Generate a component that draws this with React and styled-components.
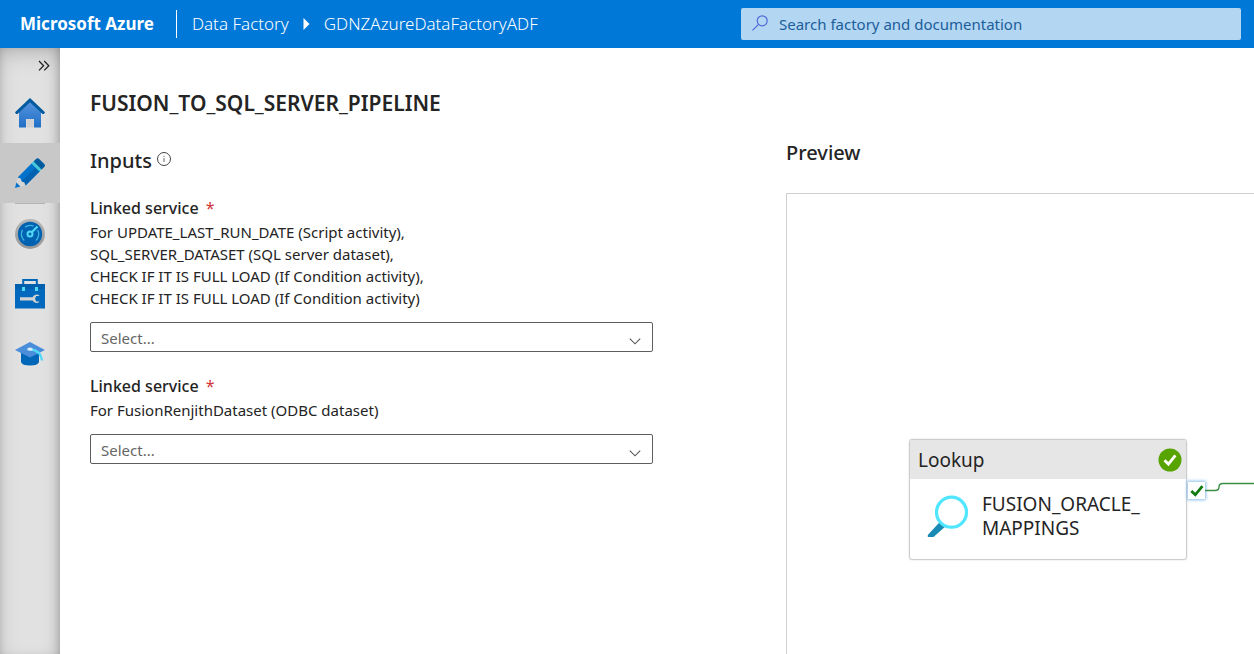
import React from 'react';
import styled, { createGlobalStyle } from 'styled-components';

const GlobalStyle = createGlobalStyle`
  * {
    box-sizing: border-box;
  }

  body {
    margin: 0;
    background: #fff;
    color: #242424;
    font-family: 'Noto Sans', 'Open Sans', sans-serif;
    font-size: 15px;
  }

  button, input, select {
    font-family: inherit;
  }
`;

const Page = styled.div`
  display: flex;
  flex-direction: column;
  height: 100vh;
  min-height: 600px;
`;

const TopBar = styled.header`
  display: flex;
  align-items: center;
  flex: none;
  height: 48px;
  padding: 0 13px 0 20px;
  background: #0078d7;
  color: #fff;
`;

const Brand = styled.a`
  color: inherit;
  font-size: 17px;
  font-weight: 700;
  line-height: 24px;
  text-decoration: none;
  white-space: nowrap;
`;

const BarDivider = styled.span`
  width: 1px;
  height: 28px;
  margin: 0 15px 0 22px;
  background: #fff;
`;

const Crumbs = styled.nav`
  display: flex;
  align-items: center;
  flex: 1;
  gap: 14px;
`;

const Crumb = styled.a`
  color: inherit;
  font-size: 17px;
  font-weight: 300;
  line-height: 24px;
  text-decoration: none;
  white-space: nowrap;
`;

const SearchBox = styled.label`
  display: flex;
  align-items: center;
  width: 40vw;
  max-width: 500px;
  height: 32px;
  padding: 0 11px;
  gap: 11px;
  border-radius: 2px;
  background: #b3d6f2;
`;

const SearchInput = styled.input`
  flex: 1;
  min-width: 0;
  padding: 0;
  border: 0;
  outline: 0;
  background: transparent;
  color: #005a9e;
  font-size: 15px;

  &::placeholder {
    color: #1b5e9b;
    opacity: 1;
  }
`;

const Body = styled.div`
  display: flex;
  flex: 1;
  min-height: 0;
`;

const Rail = styled.nav`
  display: flex;
  flex-direction: column;
  flex: none;
  width: 60px;
  background: #e1e1e1;
  box-shadow: inset 0 8px 24px -8px rgba(0, 0, 0, 0.3),
    inset -8px 0 12px -8px rgba(0, 0, 0, 0.28),
    inset 6px 0 10px -8px rgba(0, 0, 0, 0.2);
`;

const ExpandButton = styled.button`
  display: flex;
  align-items: center;
  justify-content: flex-end;
  height: 35px;
  padding: 0 10px 0 0;
  border: 0;
  background: transparent;
`;

const RailItem = styled.a`
  display: flex;
  align-items: center;
  justify-content: center;
  height: 60px;
  background: ${({ $active }) => ($active ? '#c8c8c8' : 'transparent')};
`;

const RailDivider = styled.span`
  height: 1px;
  margin: 0 15px;
  background: #b4b4b4;
`;

const Main = styled.main`
  display: grid;
  flex: 1;
  grid-template-columns: minmax(0, 58fr) minmax(0, 39fr);
  min-width: 0;
  padding-left: 30px;
`;

const FormColumn = styled.section`
  padding: 40px 133px 0 0;
`;

const Title = styled.h1`
  margin: 0;
  font-size: 21px;
  font-weight: 600;
  line-height: 30px;
  white-space: nowrap;
`;

const SectionHeading = styled.h2`
  display: flex;
  align-items: center;
  gap: 5px;
  margin: 0;
  font-size: 20px;
  font-weight: 500;
  line-height: 30px;
`;

const InputsHeading = styled(SectionHeading)`
  margin-top: 28px;
`;

const Field = styled.div`
  display: flex;
  flex-direction: column;
  margin-top: 21px;

  & + & {
    margin-top: 23px;
  }
`;

const FieldLabel = styled.label`
  font-size: 16px;
  font-weight: 500;
  line-height: 22px;
`;

const Required = styled.span`
  margin-left: 3px;
  color: #d13438;
  font-weight: 400;
`;

const Uses = styled.div`
  margin: 2px 0 13px;
  font-size: 15px;
  line-height: 22px;
`;

const UseLine = styled.span`
  display: block;
  white-space: nowrap;
`;

const SelectWrap = styled.div`
  display: grid;
  align-items: center;

  > * {
    grid-area: 1 / 1;
  }

  > svg {
    justify-self: end;
    margin: 8px 12px 0 0;
    pointer-events: none;
  }
`;

const Select = styled.select`
  appearance: none;
  width: 100%;
  height: 30px;
  padding: 2px 10px 0;
  border: 1px solid #605e5c;
  border-radius: 2px;
  background: #fff;
  color: #666;
  font-size: 15px;
`;

const PreviewColumn = styled.section`
  display: flex;
  flex-direction: column;
  padding-top: 90px;
  overflow: hidden;
`;

const Canvas = styled.div`
  position: relative;
  flex: 1;
  margin-top: 25px;
  border: solid #d2d0ce;
  border-width: 1px 0 0 1px;
  overflow: hidden;
`;

const Node = styled.article`
  position: absolute;
  top: 245px;
  left: 122px;
  width: 278px;
  height: 121px;
  border: 1px solid #cdcdcd;
  border-radius: 3px;
  background: #fff;
  box-shadow: 0 0 2px rgba(0, 0, 0, 0.15);
`;

const NodeHeader = styled.header`
  display: flex;
  align-items: center;
  justify-content: space-between;
  height: 39px;
  padding: 0 4px 0 8px;
  background: #e6e6e6;
  font-size: 19px;
  line-height: 24px;
`;

const NodeBody = styled.div`
  display: flex;
  align-items: center;
  gap: 13px;
  height: 74px;
  padding-left: 17px;
  font-size: 19px;
  line-height: 24px;
`;

const NodeName = styled.div`
  width: 170px;
`;

const Port = styled.span`
  position: absolute;
  top: 288px;
  left: 401px;
  display: flex;
  align-items: center;
  justify-content: center;
  width: 17px;
  height: 17px;
  background: #fff;
  box-shadow: 0 0 3px 1px #8abdea;
`;

const Connector = styled.svg`
  position: absolute;
  top: 287px;
  left: 418px;
`;

const ChevronsIcon = () => (
  <svg width="12" height="12" viewBox="0 0 12 12" fill="none" stroke="#222" strokeWidth="1.3">
    <path d="M1 1l4.6 4.7L1 10.4M6.2 1l4.6 4.7-4.6 4.7" />
  </svg>
);

const CrumbArrow = () => (
  <svg width="7" height="12" viewBox="0 0 7 12">
    <path d="M0.5 0L6.5 6L0.5 12Z" fill="#fff" />
  </svg>
);

const SearchIcon = () => (
  <svg width="16" height="18" viewBox="0 0 16 18" fill="none" stroke="#4f6bd9" strokeWidth="1.2">
    <circle cx="10.2" cy="5.8" r="5" />
    <path d="M6.5 9.4L.5 15.4" />
  </svg>
);

const HomeIcon = () => (
  <svg width="30" height="30" viewBox="0 0 30 30">
    <defs>
      <linearGradient id="home" x1="0" y1="0" x2="0" y2="1">
        <stop offset="0" stopColor="#5a96e0" />
        <stop offset="1" stopColor="#1f6fc6" />
      </linearGradient>
    </defs>
    <path d="M15 2L26 12V29.5H19V21H11V29.5H4V12Z" fill="url(#home)" />
    <path d="M11.5 21h7v8.5h-7z" fill="#d2d2d2" />
    <path d="M15 0L30 14.3L29 16H27.5L15 4.2L2.5 16H1L0 14.3Z" fill="#005a9e" />
  </svg>
);

const PencilIcon = () => (
  <svg width="30" height="30" viewBox="0 0 30 30">
    <path d="M2.6 19.4L17 5L25 13L10.6 27.4Z" fill="#0072cc" />
    <path d="M6.6 23.4L21 9L25 13L10.6 27.4Z" fill="#0062b1" />
    <path d="M16.4 5.6L24.4 13.6L27.4 10.6L19.4 2.6Z" fill="#45c8dc" />
    <path d="M18.6 3.4L21 1Q22.6-.6 24.2 1L29 5.8Q30.8 7.4 29.2 9L26.6 11.4Z" fill="#005a9e" />
    <path d="M2.6 19.4L0 30L10.6 27.4L9.4 24.4L6.6 23.4L5.6 20.6Z" fill="#d6d6d6" />
    <path d="M1.4 24.6L0 30L5.4 28.6Z" fill="#0072cc" />
  </svg>
);

const GaugeIcon = () => (
  <svg width="30" height="30" viewBox="0 0 30 30">
    <defs>
      <linearGradient id="gauge" x1="0" y1="0" x2="0" y2="1">
        <stop offset="0" stopColor="#b8b8b8" />
        <stop offset="1" stopColor="#969696" />
      </linearGradient>
    </defs>
    <circle cx="15" cy="15" r="15" fill="url(#gauge)" />
    <circle cx="15" cy="15" r="12.2" fill="#0062b1" />
    <g fill="none" stroke="#3fb4e0" strokeWidth="1.4">
      <path d="M9.2 21.5A8.6 8.6 0 0 1 7.5 10.8M10 8.2A8.6 8.6 0 0 1 18.6 7.1" />
      <path d="M22.6 11A8.6 8.6 0 0 1 20.8 21.5" />
      <path d="M16.5 13.5L22.5 7.5" stroke="#50d9f5" strokeWidth="2.2" />
      <circle cx="15" cy="15" r="2.5" stroke="#50d9f5" strokeWidth="2" />
    </g>
  </svg>
);

const ToolboxIcon = () => (
  <svg width="30" height="30" viewBox="0 0 30 30">
    <path d="M8.2 5.5V1H21.8V5.5" fill="none" stroke="#0067b8" strokeWidth="2" />
    <path d="M0 5h30v24.5H0z" fill="#0069bd" />
    <path d="M0 5h30v5H0z" fill="#0060ad" />
    <path d="M7 8h3v4H7zM20 8h3v4h-3z" fill="#50d9f5" />
    <path
      d="M5 18.2H17.6A4.2 4.2 0 0 1 24.6 17H21.2L20 19.8L21.2 22.4H24.6A4.2 4.2 0 0 1 17.6 21.6H5Z"
      fill="#d2d2d2"
    />
  </svg>
);

const LearnIcon = () => (
  <svg width="30" height="30" viewBox="0 0 30 30">
    <path d="M6 13H24V23Q23 26.6 15 26.6T6 23Z" fill="#0067b8" />
    <path d="M15 3L30 11L15 18.6L0 11Z" fill="#4a8edb" />
    <path d="M15 10.2Q26 11.5 27 21.5" fill="none" stroke="#50d9f5" strokeWidth="2.4" />
    <ellipse cx="15" cy="10.2" rx="2.8" ry="1.6" fill="#d8ecf5" />
  </svg>
);

const InfoIcon = () => (
  <svg width="14" height="18" viewBox="0 0 14 18" fill="none" stroke="#444">
    <circle cx="7" cy="7" r="6.5" />
    <path d="M7 6v4M7 3.8v1.1" stroke="#666" />
  </svg>
);

const ChevronDown = () => (
  <svg width="12" height="7" viewBox="0 0 12 7" fill="none" stroke="#555" strokeWidth="1.1">
    <path d="M.8.7L6 5.8L11.2.7" />
  </svg>
);

const SuccessIcon = () => (
  <svg width="24" height="24" viewBox="0 0 24 24">
    <circle cx="12" cy="12" r="11.5" fill="#57a300" />
    <path d="M6.5 12.3L10.4 16.1L17.4 7.4" fill="none" stroke="#fff" strokeWidth="2.8" />
  </svg>
);

const LookupIcon = () => (
  <svg width="42" height="42" viewBox="0 0 42 42">
    <path d="M12.8 27L18 31.8L6.5 42H0.8V40Z" fill="#198ab3" />
    <circle cx="24.5" cy="17.2" r="15" fill="#fff" stroke="#50e6ff" strokeWidth="3.2" />
  </svg>
);

const PortCheck = () => (
  <svg width="14" height="12" viewBox="0 0 14 12" fill="none" stroke="#107c10" strokeWidth="2.8">
    <path d="M1.3 6L5.3 9.8L12.4 1.2" />
  </svg>
);

const railItems = [
  { name: 'Home', Icon: HomeIcon },
  { name: 'Author', Icon: PencilIcon, active: true },
  { name: 'Monitor', Icon: GaugeIcon },
  { name: 'Manage', Icon: ToolboxIcon },
  { name: 'Learning center', Icon: LearnIcon },
];

const fields = [
  {
    id: 'linked-service-sql',
    uses: [
      'For UPDATE_LAST_RUN_DATE (Script activity),',
      'SQL_SERVER_DATASET (SQL server dataset),',
      'CHECK IF IT IS FULL LOAD (If Condition activity),',
      'CHECK IF IT IS FULL LOAD (If Condition activity)',
    ],
  },
  {
    id: 'linked-service-odbc',
    uses: ['For FusionRenjithDataset (ODBC dataset)'],
  },
];

const LinkedServiceField = ({ id, uses }) => (
  <Field>
    <FieldLabel htmlFor={id}>
      Linked service <Required>*</Required>
    </FieldLabel>
    <Uses>
      {uses.map((line, i) => (
        <UseLine key={i}>{line}</UseLine>
      ))}
    </Uses>
    <SelectWrap>
      <Select id={id} defaultValue="">
        <option value="">Select...</option>
      </Select>
      <ChevronDown />
    </SelectWrap>
  </Field>
);

export default () => (
  <Page>
    <GlobalStyle />
    <TopBar>
      <Brand href="#">Microsoft Azure</Brand>
      <BarDivider />
      <Crumbs aria-label="Breadcrumb">
        <Crumb href="#">Data Factory</Crumb>
        <CrumbArrow />
        <Crumb href="#">GDNZAzureDataFactoryADF</Crumb>
      </Crumbs>
      <SearchBox>
        <SearchIcon />
        <SearchInput
          type="search"
          aria-label="Search"
          placeholder="Search factory and documentation"
        />
      </SearchBox>
    </TopBar>
    <Body>
      <Rail aria-label="Sections">
        <ExpandButton type="button" aria-label="Expand">
          <ChevronsIcon />
        </ExpandButton>
        {railItems.map(({ name, Icon, active }) => (
          <React.Fragment key={name}>
            <RailItem href="#" aria-label={name} $active={active}>
              <Icon />
            </RailItem>
            {active && <RailDivider />}
          </React.Fragment>
        ))}
      </Rail>
      <Main>
        <FormColumn>
          <Title>FUSION_TO_SQL_SERVER_PIPELINE</Title>
          <InputsHeading>
            Inputs <InfoIcon />
          </InputsHeading>
          {fields.map((field) => (
            <LinkedServiceField key={field.id} {...field} />
          ))}
        </FormColumn>
        <PreviewColumn>
          <SectionHeading>Preview</SectionHeading>
          <Canvas>
            <Node>
              <NodeHeader>
                Lookup <SuccessIcon />
              </NodeHeader>
              <NodeBody>
                <LookupIcon />
                <NodeName>
                  FUSION_ORACLE_
                  <br />
                  MAPPINGS
                </NodeName>
              </NodeBody>
            </Node>
            <Port>
              <PortCheck />
            </Port>
            <Connector width="200" height="18" fill="none" stroke="#3c8f46" strokeWidth="1.4">
              <path d="M0 9.5H10Q14 9.5 14 6T18 2.5H200" />
            </Connector>
          </Canvas>
        </PreviewColumn>
      </Main>
    </Body>
  </Page>
);
